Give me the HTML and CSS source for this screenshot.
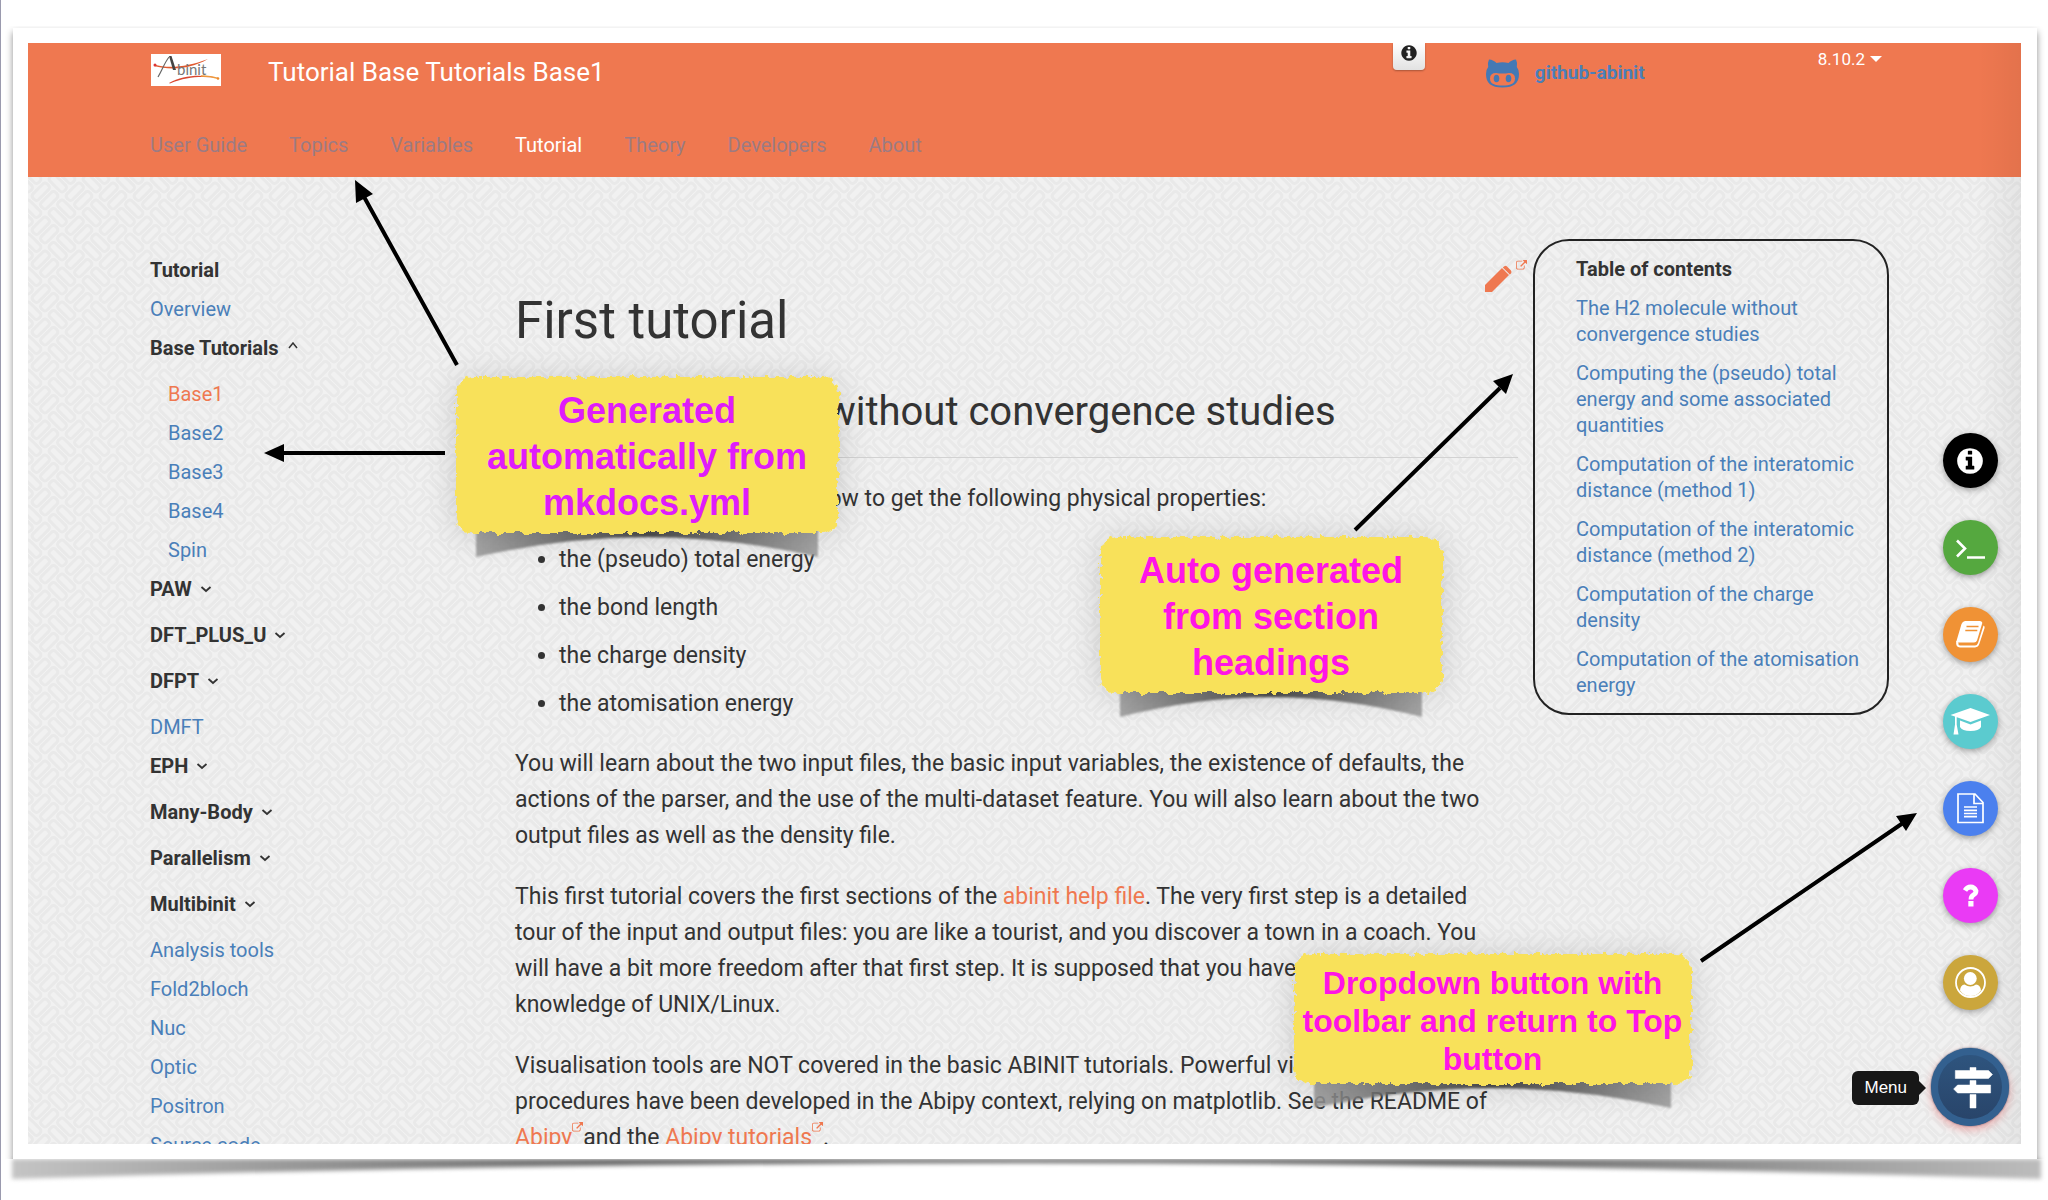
FILE: index.html
```html
<!DOCTYPE html>
<html lang="en">
<head>
<meta charset="utf-8">
<title>Tutorial Base Tutorials Base1</title>
<link rel="stylesheet" href="styles.css">
</head>
<body>
<svg class="defs" aria-hidden="true">
  <defs>
    <filter id="torn" x="-5%" y="-5%" width="110%" height="110%">
      <feTurbulence type="fractalNoise" baseFrequency="0.15" numOctaves="3" seed="4" result="n"/>
      <feDisplacementMap in="SourceGraphic" in2="n" scale="9" xChannelSelector="R" yChannelSelector="G"/>
    </filter>
    <linearGradient id="curl">
      <stop offset="0" stop-color="#999"/><stop offset="0.5" stop-color="#333"/><stop offset="1" stop-color="#999"/>
    </linearGradient>
    <linearGradient id="edge">
      <stop offset="0" stop-color="#c4c4c4"/><stop offset="0.3" stop-color="#666"/><stop offset="0.7" stop-color="#666"/><stop offset="1" stop-color="#bcbcbc"/>
    </linearGradient>
    <symbol id="ext" viewBox="0 0 1792 1792"><path d="M1408 928v320q0 119-84.500 203.500t-203.500 84.500h-832q-119 0-203.500-84.500t-84.500-203.500v-832q0-119 84.500-203.500t203.500-84.500h704q14 0 23 9t9 23v64q0 14-9 23t-23 9h-704q-66 0-113 47t-47 113v832q0 66 47 113t113 47h832q66 0 113-47t47-113v-320q0-14 9-23t23-9h64q14 0 23 9t9 23zm384-864v512q0 26-19 45t-45 19-45-19l-176-176-652 652q-10 10-23 10t-23-10l-114-114q-10-10-10-23t10-23l652-652-176-176q-19-19-19-45t19-45 45-19h512q26 0 45 19t19 45z"/></symbol>
    <symbol id="info" viewBox="0 0 1792 1792"><path d="M1152 1376v-160q0-14-9-23t-23-9h-96v-512q0-14-9-23t-23-9h-320q-14 0-23 9t-9 23v160q0 14 9 23t23 9h96v320h-96q-14 0-23 9t-9 23v160q0 14 9 23t23 9h448q14 0 23-9t9-23zm-128-896v-160q0-14-9-23t-23-9h-192q-14 0-23 9t-9 23v160q0 14 9 23t23 9h192q14 0 23-9t9-23zm640 416q0 209-103 385.500t-279.500 279.500-385.500 103-385.500-103-279.500-279.500-103-385.500 103-385.500 279.500-279.500 385.500-103 385.500 103 279.500 279.500 103 385.500z"/></symbol>
    <symbol id="down" viewBox="0 0 12 12"><path d="M1.500 4 6 8l4.500-4" fill="none" stroke="#333" stroke-width="1.800"/></symbol>
    <symbol id="up" viewBox="0 0 12 12"><path d="M2 6 6 1l4 5" fill="none" stroke="#333" stroke-width="1.500"/></symbol>
  </defs>
</svg>
<div class="slide">
  <svg class="slide-shadow" viewBox="0 0 100 24" preserveAspectRatio="none" aria-hidden="true"><path d="M0 0H100V20Q50-12 0 20Z" fill="url(#edge)"/></svg>
  <div class="card">
    <div class="screen">
      <header class="header">
        <div class="brand-row">
          <a href="#" class="logo" aria-label="Abinit">
            <svg viewBox="0 0 70 32" width="70" height="32">
              <rect width="70" height="32" fill="#fff"/>
              <path d="M3 10.500C18 15 36 13 57 5C38 16 18 16 3 12Z" fill="#e0592f"/>
              <circle cx="4" cy="11" r="1.500" fill="#d33"/>
              <path d="M7 23C11 16 14 8 18 3" fill="none" stroke="#666" stroke-width="1.200"/>
              <path d="M18 2h2.500l4.500 14h-3z" fill="#444"/>
              <text x="26" y="21" class="logo-text">binit</text>
              <path d="M18 29C32 21 50 20 68 24C50 22 36 22.500 19 29.500Z" fill="#d9472f"/>
              <path d="M50 22Q60 22 67 24.500" fill="none" stroke="#ee9a3a" stroke-width="1.300"/>
              <circle cx="67" cy="24.500" r="1.300" fill="#ee8a2a"/>
            </svg>
          </a>
          <span class="title">Tutorial Base Tutorials Base1</span>
          <button class="info-btn" aria-label="Info"><svg width="18" height="18"><use href="#info"/></svg></button>
          <a href="#" class="github">
            <svg viewBox="0 0 33 29" width="33" height="29" aria-hidden="true"><path fill-rule="evenodd" d="M3 0.500C6 0.500 9 2.500 10.500 4Q16.500 2.500 22.500 4C24 2.500 27 0.500 30 0.500Q31.800 4 30.800 8Q33 10.500 33 15C33 24 28 28.500 16.500 28.500S0 24 0 15Q0 10.500 2.200 8Q1.200 4 3 .5ZM10 14Q4 14 4 19.500C4 25 9 26.500 16.500 26.500S29 25 29 19.500Q29 14 23 14Q16.500 15 10 14Z"/><ellipse cx="10.500" cy="19.500" rx="2.800" ry="3.800"/><ellipse cx="22.500" cy="19.500" rx="2.800" ry="3.800"/></svg>
            github-abinit
          </a>
          <button class="version">8.10.2 <i class="caret"></i></button>
        </div>
        <nav class="topnav">
          <a href="#">User Guide</a><a href="#">Topics</a><a href="#">Variables</a><a href="#" class="active">Tutorial</a><a href="#">Theory</a><a href="#">Developers</a><a href="#">About</a>
        </nav>
      </header>
      <div class="columns">
        <nav class="side">
          <span class="head">Tutorial</span>
          <a href="#">Overview</a>
          <button class="group">Base Tutorials <svg width="12" height="12"><use href="#up"/></svg></button>
          <div class="sub"><a href="#" class="current">Base1</a><a href="#">Base2</a><a href="#">Base3</a><a href="#">Base4</a><a href="#">Spin</a></div>
          <button class="group">PAW <svg width="12" height="12"><use href="#down"/></svg></button>
          <button class="group">DFT_PLUS_U <svg width="12" height="12"><use href="#down"/></svg></button>
          <button class="group">DFPT <svg width="12" height="12"><use href="#down"/></svg></button>
          <a href="#">DMFT</a>
          <button class="group">EPH <svg width="12" height="12"><use href="#down"/></svg></button>
          <button class="group">Many-Body <svg width="12" height="12"><use href="#down"/></svg></button>
          <button class="group">Parallelism <svg width="12" height="12"><use href="#down"/></svg></button>
          <button class="group">Multibinit <svg width="12" height="12"><use href="#down"/></svg></button>
          <a href="#">Analysis tools</a>
          <a href="#">Fold2bloch</a>
          <a href="#">Nuc</a>
          <a href="#">Optic</a>
          <a href="#">Positron</a>
          <a href="#">Source code</a>
        </nav>
        <main class="content">
          <a href="#" class="edit" aria-label="Edit this page">
            <svg viewBox="0 0 27 27" width="27" height="27"><path d="M0 20 17 3l7 7L7 27H0ZM19 1.500Q20.500 0 22 1.500l4 4Q27 7 26 8.500l-1.200 1L17.800 2.500Z"/></svg>
            <svg width="11" height="11"><use href="#ext"/></svg>
          </a>
          <h1>First tutorial</h1>
          <h2>The H2 molecule without convergence studies</h2>
          <p>This tutorial aims at showing how to get the following physical properties:</p>
          <ul>
            <li>the (pseudo) total energy</li>
            <li>the bond length</li>
            <li>the charge density</li>
            <li>the atomisation energy</li>
          </ul>
          <p>You will learn about the two input files, the basic input variables, the existence of defaults, the actions of the parser, and the use of the multi-dataset feature. You will also learn about the two output files as well as the density file.</p>
          <p>This first tutorial covers the first sections of the <a href="#">abinit help file</a>. The very first step is a detailed tour of the input and output files: you are like a tourist, and you discover a town in a coach. You will have a bit more freedom after that first step. It is supposed that you have some good knowledge of UNIX/Linux.</p>
          <p>Visualisation tools are NOT covered in the basic ABINIT tutorials. Powerful visualisation procedures have been developed in the Abipy context, relying on matplotlib. See the README of <a href="#">Abipy<svg class="ext" width="11" height="11"><use href="#ext"/></svg></a>and the <a href="#">Abipy tutorials<svg class="ext" width="11" height="11"><use href="#ext"/></svg></a>.</p>
        </main>
        <aside class="toc">
          <span class="head">Table of contents</span>
          <a href="#">The H2 molecule without convergence studies</a>
          <a href="#">Computing the (pseudo) total energy and some associated quantities</a>
          <a href="#">Computation of the interatomic distance (method 1)</a>
          <a href="#">Computation of the interatomic distance (method 2)</a>
          <a href="#">Computation of the charge density</a>
          <a href="#">Computation of the atomisation energy</a>
        </aside>
      </div>
      <div class="tools">
        <button class="fab black" aria-label="Info"><svg width="30" height="30"><use href="#info"/></svg></button>
        <button class="fab green" aria-label="Terminal"><svg viewBox="0 0 55 55" width="55" height="55"><path d="m14 20.500 8 8-8 8M24 37.500h18" fill="none" stroke="#fff" stroke-width="2.600"/></svg></button>
        <button class="fab orange" aria-label="Book"><svg viewBox="0 0 55 55" width="55" height="55"><path d="M22 14H37Q40 14.500 39 17L34 33.500Q33.300 35.500 31 35.500H15L13.200 35L18.500 17Q19.500 14.500 22 14Z"/><path d="M13.200 34Q12.500 40.500 17 40.500H32Q35.500 40 36.300 37L41.600 21Q42 19 40.500 18.500L35 36Q34 38.500 32 38.500H17Q15 38 15.300 35.500Z"/><path d="M23.500 19.500h12M22.300 23.500h12" stroke="#f09235" stroke-width="1.500"/></svg></button>
        <button class="fab teal" aria-label="Lessons"><svg viewBox="0 0 55 55" width="55" height="55"><path d="M7.500 21 27.500 14 47 21 27.500 28ZM17 26.500l10.500 4 10.500-4V33Q36 37 27.500 37T17 33ZM12 22.500h1.700v8l1.800 10h-5L12 30.500Z"/></svg></button>
        <button class="fab blue" aria-label="Document"><svg viewBox="0 0 55 55" width="55" height="55"><path d="M15 13H32L40 21.500V41.500H15ZM31 13V22.500H40M21 26h13M21 29.300h13M21 32.500h13M21 35.700h13" fill="none" stroke="#fff" stroke-width="1.700"/></svg></button>
        <button class="fab pink" aria-label="Help"><svg viewBox="0 0 55 55" width="55" height="55"><path d="M22 22.500Q24 19 27.700 19T33 23Q33 25.500 30.500 26.800T28 31.500" fill="none" stroke="#fff" stroke-width="4.800"/><path d="M25.300 33h5.200v5.500h-5.200z"/></svg></button>
        <button class="fab gold" aria-label="Account"><svg viewBox="0 0 55 55" width="55" height="55"><circle cx="27.500" cy="27.500" r="14.500" fill="none" stroke="#fff" stroke-width="1.800"/><circle cx="27.300" cy="23.500" r="6.400"/><path d="M17 35.500Q17.500 30 21.500 29.500Q27.500 33.500 33 29.500Q37.500 30 38 35.500Q34 41 27.500 41T17 35.500Z"/></svg></button>
        <button class="menu-btn" aria-label="Menu"><svg viewBox="0 0 78 78" width="78" height="78"><path d="M39 19.500h6v3h12.500l4 4-4 4H24.300v-8H39ZM39 32.500h6v4.500h14.600v8H26.600l-4-4 4-4H39ZM39 46.500h6V60h-6Z" stroke="#fff" stroke-width=".5"/></svg></button>
        <span class="tip">Menu</span>
      </div>
    </div>
  </div>
  <svg class="arrows" aria-hidden="true">
    <g stroke="#000" stroke-width="4"><path d="M456 365 362 195M444 453H280M1354 530 1499 388M1700 961 1902 823"/></g>
    <path d="M354 180l18 14-17 9zM263 453l20-9v18zM1512 374l-7 20-13-13zM1916 813l-11 18-10-15z"/>
  </svg>
  <div class="note note-nav">
    <svg class="note-curl" viewBox="0 0 100 40" preserveAspectRatio="none"><path d="M0 0H100V38Q50-4 0 38Z" fill="url(#curl)"/></svg>
    <p>Generated automatically from mkdocs.yml</p>
  </div>
  <div class="note note-toc">
    <svg class="note-curl" viewBox="0 0 100 40" preserveAspectRatio="none"><path d="M0 0H100V38Q50-4 0 38Z" fill="url(#curl)"/></svg>
    <p>Auto generated from section headings</p>
  </div>
  <div class="note note-menu">
    <svg class="note-curl" viewBox="0 0 100 40" preserveAspectRatio="none"><path d="M0 0H100V38Q50-4 0 38Z" fill="url(#curl)"/></svg>
    <p>Dropdown button with toolbar and return to Top button</p>
  </div>
</div>
</body>
</html>
```
FILE: styles.css
```css
* { box-sizing: border-box; }
body { margin: 0; background: #fff; font-family: Roboto, sans-serif; color: #333; }
a { color: #4a7fb9; text-decoration: none; }
button { border: 0; padding: 0; background: none; font: inherit; color: inherit; cursor: pointer; }
.defs { position: absolute; width: 0; height: 0; }

.slide { position: relative; height: 100vh; padding: 28px 11px 41px 12px; border-left: 1px solid #9a9aae; overflow: hidden; }
.slide-shadow { position: absolute; left: 11px; bottom: 17px; width: calc(100% - 18px); height: 24px; filter: blur(2px); }
.card { position: relative; height: 100%; padding: 15px 16px 15px 15px; background: #fff; box-shadow: 0 4px 7px rgba(0,0,0,.45); clip-path: inset(-2px -12px 0 -12px); }
.screen {
  position: relative; height: 100%; overflow: hidden; background-color: #f1f1f1;
  background-image: url("data:image/svg+xml,%3Csvg xmlns='http://www.w3.org/2000/svg' width='34' height='34'%3E%3Cg fill='none' stroke='%23e9e9e9' stroke-width='3'%3E%3Cg transform='translate(17 17) rotate(-45)'%3E%3Crect x='-10' y='-10' width='20' height='8' rx='3'/%3E%3Crect x='-10' y='2' width='20' height='8' rx='3'/%3E%3C/g%3E%3Cg transform='rotate(45)'%3E%3Crect x='-10' y='-10' width='20' height='8' rx='3'/%3E%3Crect x='-10' y='2' width='20' height='8' rx='3'/%3E%3C/g%3E%3Cg transform='translate(34 0) rotate(45)'%3E%3Crect x='-10' y='-10' width='20' height='8' rx='3'/%3E%3Crect x='-10' y='2' width='20' height='8' rx='3'/%3E%3C/g%3E%3Cg transform='translate(0 34) rotate(45)'%3E%3Crect x='-10' y='-10' width='20' height='8' rx='3'/%3E%3Crect x='-10' y='2' width='20' height='8' rx='3'/%3E%3C/g%3E%3Cg transform='translate(34 34) rotate(45)'%3E%3Crect x='-10' y='-10' width='20' height='8' rx='3'/%3E%3Crect x='-10' y='2' width='20' height='8' rx='3'/%3E%3C/g%3E%3C/g%3E%3C/svg%3E");
}
.screen::after { content: ""; position: absolute; inset: 0 0 0 auto; width: 44px; background: linear-gradient(90deg, rgba(0,0,0,0), rgba(0,0,0,.05)); pointer-events: none; }

.header { height: 134px; padding: 0 132px 0 122px; background: #ef7850; color: #fff; }
.brand-row { display: flex; align-items: flex-start; height: 80px; }
.logo { display: block; margin: 11px 47px 0 1px; line-height: 0; }
.logo-text { font: 15px Lato, sans-serif; fill: #777; }
.title { flex: 1; margin-top: 13px; font-size: 26px; line-height: 32px; }
.info-btn { width: 32px; height: 27px; margin-right: 61px; padding-bottom: 8px; border-radius: 0 0 4px 4px; background: linear-gradient(#fff, #e2e2e2); fill: #222; box-shadow: 0 1px 2px rgba(0,0,0,.3); line-height: 0; }
.github { display: flex; gap: 16px; width: 332px; margin-top: 16px; font-size: 19px; font-weight: 700; line-height: 28px; fill: #4479b5; }
.version { display: flex; align-items: center; gap: 5px; margin: 6px 7px 0 0; font-size: 17px; line-height: 20px; }
.caret { border: 6px solid transparent; border-top-color: #fff; border-bottom: 0; }
.topnav { display: flex; gap: 42px; padding-top: 10px; font-size: 20px; line-height: 24px; }
.topnav a { color: #9c7b83; }
.topnav .active { color: #fff; }

.columns { display: grid; grid-template-columns: 350px minmax(0, 1fr) 356px; column-gap: 15px; padding: 0 132px 0 122px; align-items: start; }
.side, .toc { display: flex; flex-direction: column; align-items: flex-start; gap: 13px; font-size: 20px; line-height: 26px; }
.side { padding-top: 80px; }
.head { font-weight: 700; }
.group { display: flex; align-items: center; gap: 8px; margin-bottom: 7px; font-weight: 700; line-height: 26px; }
.sub { display: flex; flex-direction: column; gap: 13px; padding-left: 18px; }
.sub .current { color: #ef7850; }

.content { position: relative; padding-top: 109px; font-size: 23px; line-height: 36px; }
.content a { color: #ef7850; fill: #ef7850; }
h1 { margin: 0 0 28px; font-size: 51px; font-weight: 400; line-height: 70px; }
h2 { margin: 0 0 23px; padding-bottom: 17px; border-bottom: 1px solid #d2d2d2; font-size: 40px; font-weight: 400; line-height: 56px; }
.content p { margin: 0 0 25px; padding-right: 14px; }
ul { display: flex; flex-direction: column; gap: 12px; margin: 0 0 24px; padding-left: 44px; }
.edit { position: absolute; top: 83px; right: -9px; display: flex; align-items: flex-start; gap: 4px; line-height: 0; }
.edit svg:first-child { margin-top: 5px; }
.ext { vertical-align: 12px; }

.toc { margin-top: 62px; padding: 15px 20px 15px 41px; border: 2px solid #222; border-radius: 36px; }

.tools { position: absolute; right: 12px; bottom: 18px; z-index: 2; display: flex; flex-direction: column; align-items: center; gap: 32px; }
.fab, .menu-btn { display: grid; place-items: center; border-radius: 50%; fill: #fff; box-shadow: 0 2px 6px rgba(0,0,0,.35); }
.fab { width: 55px; height: 55px; }
.black { background: #000; }
.green { background: #55a83f; }
.orange { background: #f09235; }
.teal { background: #5bcbcf; }
.blue { background: #4b80ee; }
.pink { background: #ea3af5; }
.gold { background: #cba63c; }
.menu-btn { width: 78px; height: 78px; margin-top: 6px; background: linear-gradient(#2f5680, #284368); box-shadow: inset 0 0 0 7px #33608f, 0 4px 10px rgba(225,60,60,.4), 0 0 2px #1c3858; }
.tip { position: absolute; right: 90px; bottom: 21px; padding: 0 12px; border-radius: 6px; background: #171717; color: #fff; font: 17px/34px "Liberation Sans", Arial, sans-serif; }
.tip::after { content: ""; position: absolute; left: 100%; top: 10px; border: 7px solid transparent; border-left-color: #171717; border-right: 0; }

.arrows { position: absolute; left: 0; top: 0; width: 100%; height: 100%; pointer-events: none; }
.note { position: absolute; isolation: isolate; display: grid; place-items: center; text-align: center; font: 700 36px/46px "Liberation Sans", Arial, sans-serif; color: #ff14e6; }
.note::before { content: ""; position: absolute; z-index: -1; inset: 0; border-radius: 16px; background: #f8e15a; filter: url(#torn) drop-shadow(0 2px 16px rgba(0,0,0,.16)); }
.note p { margin: 0; padding-top: 4px; }
.note-curl { position: absolute; z-index: -2; left: 20px; top: calc(100% - 12px); width: calc(100% - 40px); height: 38px; opacity: .85; filter: blur(1px); }
.note-nav { left: 455px; top: 377px; width: 382px; height: 156px; padding: 0 20px; color: #df1cfa; }
.note-toc { left: 1099px; top: 537px; width: 342px; height: 156px; padding: 0 20px; }
.note-menu { left: 1293px; top: 954px; width: 397px; height: 130px; font-size: 32px; line-height: 38px; }
```
